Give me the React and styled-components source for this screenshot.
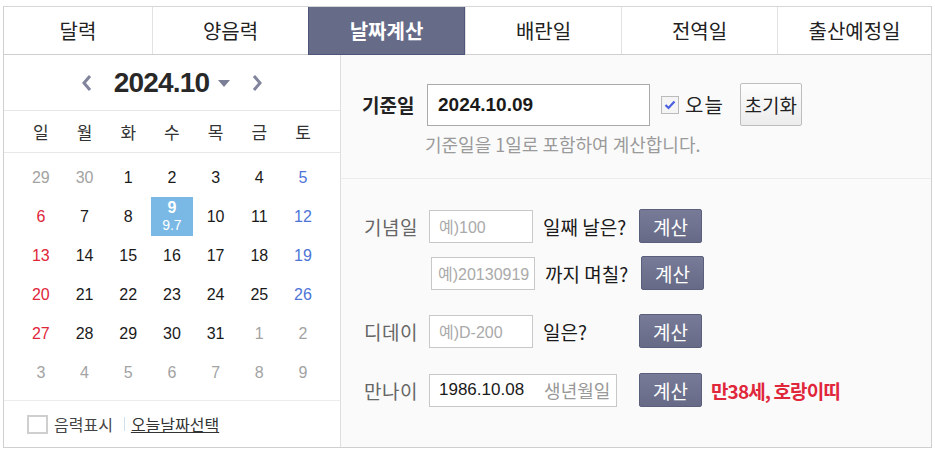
import styled, { createGlobalStyle } from 'styled-components';

const GlobalStyle = createGlobalStyle`
  body {
    margin: 0;
    background: #fff;
    font-family: "Liberation Sans", "Noto Sans CJK KR", sans-serif;
  }
`;

const Page = styled.div`
  padding: 6px 0 0 3px;
`;

const Frame = styled.div`
  width: 927px;
  border: 1px solid #cfcfcf;
  border-top: 1px solid #d6d6d6;
`;

const Tabs = styled.div`
  display: grid;
  grid-template-columns: 148px 156px 157px 156px 156px 154px;
  height: 47px;
  border-bottom: 1px solid #cfcfcf;
`;

const Tab = styled.div`
  display: flex;
  align-items: center;
  justify-content: center;
  font-family: "Noto Sans CJK KR", sans-serif;
  font-size: 20px;
  font-weight: ${({ $active }) => ($active ? 700 : 400)};
  color: ${({ $active }) => ($active ? '#fff' : '#222')};
  background: ${({ $active }) => ($active ? '#666b88' : '#fff')};
  border-left: 1px solid ${({ $active }) => ($active ? '#4f5578' : '#e2e2e2')};
  ${({ $active }) => $active && 'border-right: 1px solid #4f5578; margin-bottom: -1px; border-bottom: 1px solid #4f5578;'}
  &:first-child {
    border-left: none;
  }
`;

const Body = styled.div`
  display: flex;
`;

const CalendarPanel = styled.div`
  width: 336px;
  border-right: 1px solid #dedede;
  background: #fff;
`;

const CalHeader = styled.div`
  height: 55px;
  display: flex;
  align-items: center;
  justify-content: center;
  border-bottom: 1px solid #e6e6e6;
`;

const NavArrow = styled.span`
  display: flex;
  align-items: center;
  margin: ${({ $side }) => ($side === 'left' ? '0 22px 0 0' : '0 0 0 22px')};
`;

const MonthTitle = styled.span`
  font-size: 28px;
  font-weight: 700;
  color: #282828;
  letter-spacing: -0.8px;
`;

const Caret = styled.span`
  width: 0;
  height: 0;
  margin-left: 9px;
  margin-top: 2px;
  border-left: 6px solid transparent;
  border-right: 6px solid transparent;
  border-top: 7px solid #7a7e96;
`;

const WeekRow = styled.div`
  display: grid;
  grid-template-columns: repeat(7, 43.7px);
  padding: 0 15px;
  height: 41px;
  align-items: center;
  border-bottom: 1px solid #e8e8e8;
`;

const WeekDay = styled.span`
  text-align: center;
  font-family: "Noto Sans CJK KR", sans-serif;
  font-size: 17px;
  color: #333;
`;

const DayGrid = styled.div`
  display: grid;
  grid-template-columns: repeat(7, 43.7px);
  grid-auto-rows: 39px;
  padding: 5px 15px 8px;
  border-bottom: 1px solid #ececec;
`;

const dayColors = {
  muted: '#a3a3a3',
  sun: '#e0263a',
  sat: '#4d74d6',
  normal: '#1a1a1a',
};

const Day = styled.div`
  display: flex;
  flex-direction: column;
  align-items: center;
  justify-content: ${({ $selected }) => ($selected ? 'flex-start' : 'center')};
  padding-top: ${({ $selected }) => ($selected ? '2px' : '0')};
  margin: 0 ${({ $selected }) => ($selected ? '1px' : '0')};
  font-size: 16px;
  color: ${({ $tone }) => dayColors[$tone]};
  background: ${({ $selected }) => ($selected ? '#7ab9e6' : 'transparent')};
  ${({ $selected }) => $selected && 'color: #fff; font-weight: 700;'}
`;

const Lunar = styled.span`
  font-size: 14px;
  font-weight: 400;
  line-height: 16px;
`;

const CalFooter = styled.div`
  height: 46px;
  display: flex;
  align-items: center;
  padding-left: 23px;
  font-family: "Noto Sans CJK KR", sans-serif;
  font-size: 16px;
  color: #444;
`;

const Box = styled.span`
  width: 21px;
  height: 19px;
  border: 2px solid #cfcfcf;
  box-sizing: border-box;
  background: #fff;
  margin-right: 6px;
`;

const Divider = styled.span`
  width: 1px;
  height: 14px;
  background: #cfe0ee;
  margin: 0 6px 0 11px;
`;

const LinkText = styled.span`
  text-decoration: underline;
  color: #333;
`;

const CalcPanel = styled.div`
  flex: 1;
  background: #fafafa;
`;

const BaseSection = styled.div`
  height: 124px;
  box-sizing: border-box;
  padding: 28px 0 0 21px;
  border-bottom: 1px solid #ececec;
`;

const BaseLine = styled.div`
  display: flex;
  align-items: center;
`;

const BaseLabel = styled.span`
  width: 65px;
  font-family: "Noto Sans CJK KR", sans-serif;
  font-weight: 700;
  font-size: 19px;
  color: #222;
`;

const BaseInput = styled.div`
  width: 223px;
  height: 42px;
  box-sizing: border-box;
  border: 1px solid #aaa;
  background: #fff;
  display: flex;
  align-items: center;
  padding-left: 10px;
  font-size: 19px;
  font-weight: 700;
  color: #1a1a1a;
`;

const Check = styled.span`
  width: 18px;
  height: 18px;
  box-sizing: border-box;
  border: 1px solid #bbb;
  background: #f4f4f4;
  margin: 0 6px 0 11px;
  display: flex;
  align-items: center;
  justify-content: center;
`;

const TodayLabel = styled.span`
  font-family: "Noto Sans CJK KR", sans-serif;
  font-size: 20px;
  letter-spacing: 1px;
  color: #222;
`;

const ResetButton = styled.div`
  width: 62px;
  height: 43px;
  box-sizing: border-box;
  margin-left: 16px;
  border: 1px solid #bdbdbd;
  border-radius: 2px;
  background: linear-gradient(#fdfdfd, #ececec);
  display: flex;
  align-items: center;
  justify-content: center;
  font-family: "Noto Sans CJK KR", sans-serif;
  font-size: 19px;
  color: #222;
`;

const Hint = styled.div`
  margin: 5px 0 0 63px;
  font-family: "Noto Sans CJK KR", sans-serif;
  font-size: 18px;
  color: #9a9a9a;
`;

const Rows = styled.div`
  padding: 30px 0 0 23px;
  display: flex;
  flex-direction: column;
`;

const Row = styled.div`
  display: flex;
  align-items: center;
  height: 34px;
  margin-bottom: ${({ $gap }) => $gap}px;
`;

const RowLabel = styled.span`
  width: 65px;
  font-family: "Noto Sans CJK KR", sans-serif;
  font-size: 19px;
  letter-spacing: 0.5px;
  color: #666;
`;

const Field = styled.div`
  width: ${({ $w }) => $w}px;
  height: 33px;
  box-sizing: border-box;
  margin-left: ${({ $indent }) => $indent || 0}px;
  border: 1px solid #c8c8c8;
  background: #fff;
  display: flex;
  align-items: center;
  padding-left: ${({ $pad }) => $pad || 9}px;
  font-size: ${({ $filled }) => ($filled ? 17 : 16)}px;
  color: ${({ $filled }) => ($filled ? '#1a1a1a' : '#aaa')};
  white-space: nowrap;
  overflow: hidden;
`;

const FieldHint = styled.span`
  margin-left: 20px;
  font-family: "Noto Sans CJK KR", sans-serif;
  color: #999;
  font-size: 18px;
`;

const Question = styled.span`
  width: ${({ $w }) => $w}px;
  margin-left: 10px;
  font-family: "Noto Sans CJK KR", sans-serif;
  font-size: 19px;
  color: #1a1a1a;
`;

const CalcButton = styled.div`
  width: 63px;
  height: 34px;
  box-sizing: border-box;
  border: 1px solid #5a5f7c;
  border-radius: 2px;
  background: linear-gradient(#777b97, #666a86);
  display: flex;
  align-items: center;
  justify-content: center;
  font-family: "Noto Sans CJK KR", sans-serif;
  font-size: 19px;
  color: #fff;
`;

const Result = styled.span`
  margin-left: 9px;
  font-family: "Noto Sans CJK KR", sans-serif;
  font-size: 19px;
  font-weight: 700;
  letter-spacing: -0.9px;
  color: #e0263a;
`;

const tabs = ['달력', '양음력', '날짜계산', '배란일', '전역일', '출산예정일'];
const weekdays = ['일', '월', '화', '수', '목', '금', '토'];

function buildDays() {
  const days = [];
  [29, 30].forEach((d) => days.push({ d, muted: true }));
  for (let d = 1; d <= 31; d += 1) days.push({ d });
  for (let d = 1; d <= 9; d += 1) days.push({ d, muted: true });
  return days;
}

function toneOf(day, i) {
  if (day.muted) return 'muted';
  if (i % 7 === 0) return 'sun';
  if (i % 7 === 6) return 'sat';
  return 'normal';
}

const Chevron = ({ dir }) => (
  <svg width="11" height="18" viewBox="0 0 11 18">
    <path
      d={dir === 'left' ? 'M9 2 L3 9 L9 16' : 'M2 2 L8 9 L2 16'}
      fill="none"
      stroke="#80849c"
      strokeWidth="3"
    />
  </svg>
);

export default function App() {
  const days = buildDays();

  return (
    <Page>
      <GlobalStyle />
      <Frame>
        <Tabs>
          {tabs.map((t) => (
            <Tab key={t} $active={t === '날짜계산'}>
              {t}
            </Tab>
          ))}
        </Tabs>
        <Body>
          <CalendarPanel>
            <CalHeader>
              <NavArrow $side="left">
                <Chevron dir="left" />
              </NavArrow>
              <MonthTitle>2024.10</MonthTitle>
              <Caret />
              <NavArrow $side="right">
                <Chevron dir="right" />
              </NavArrow>
            </CalHeader>
            <WeekRow>
              {weekdays.map((w) => (
                <WeekDay key={w}>{w}</WeekDay>
              ))}
            </WeekRow>
            <DayGrid>
              {days.map((day, i) => {
                const selected = !day.muted && day.d === 9;
                return (
                  <Day key={i} $tone={toneOf(day, i)} $selected={selected}>
                    {day.d}
                    {selected && <Lunar>9.7</Lunar>}
                  </Day>
                );
              })}
            </DayGrid>
            <CalFooter>
              <Box />
              음력표시
              <Divider />
              <LinkText>오늘날짜선택</LinkText>
            </CalFooter>
          </CalendarPanel>
          <CalcPanel>
            <BaseSection>
              <BaseLine>
                <BaseLabel>기준일</BaseLabel>
                <BaseInput>2024.10.09</BaseInput>
                <Check>
                  <svg width="12" height="10" viewBox="0 0 12 10">
                    <path d="M1.5 5 L4.5 8 L10.5 1.5" fill="none" stroke="#4a5fe0" strokeWidth="2.2" />
                  </svg>
                </Check>
                <TodayLabel>오늘</TodayLabel>
                <ResetButton>초기화</ResetButton>
              </BaseLine>
              <Hint>기준일을 1일로 포함하여 계산합니다.</Hint>
            </BaseSection>
            <Rows>
              <Row $gap={13}>
                <RowLabel>기념일</RowLabel>
                <Field $w={104}>예)100</Field>
                <Question $w={96}>일째 날은?</Question>
                <CalcButton>계산</CalcButton>
              </Row>
              <Row $gap={24}>
                <RowLabel />
                <Field $w={104} $indent={2} $pad={6}>예)20130919</Field>
                <Question $w={96}>까지 며칠?</Question>
                <CalcButton>계산</CalcButton>
              </Row>
              <Row $gap={25}>
                <RowLabel>디데이</RowLabel>
                <Field $w={104}>예)D-200</Field>
                <Question $w={96}>일은?</Question>
                <CalcButton>계산</CalcButton>
              </Row>
              <Row $gap={0}>
                <RowLabel>만나이</RowLabel>
                <Field $w={188} $filled>
                  1986.10.08
                  <FieldHint>생년월일</FieldHint>
                </Field>
                <Question $w={12} />
                <CalcButton>계산</CalcButton>
                <Result>만38세, 호랑이띠</Result>
              </Row>
            </Rows>
          </CalcPanel>
        </Body>
      </Frame>
    </Page>
  );
}
